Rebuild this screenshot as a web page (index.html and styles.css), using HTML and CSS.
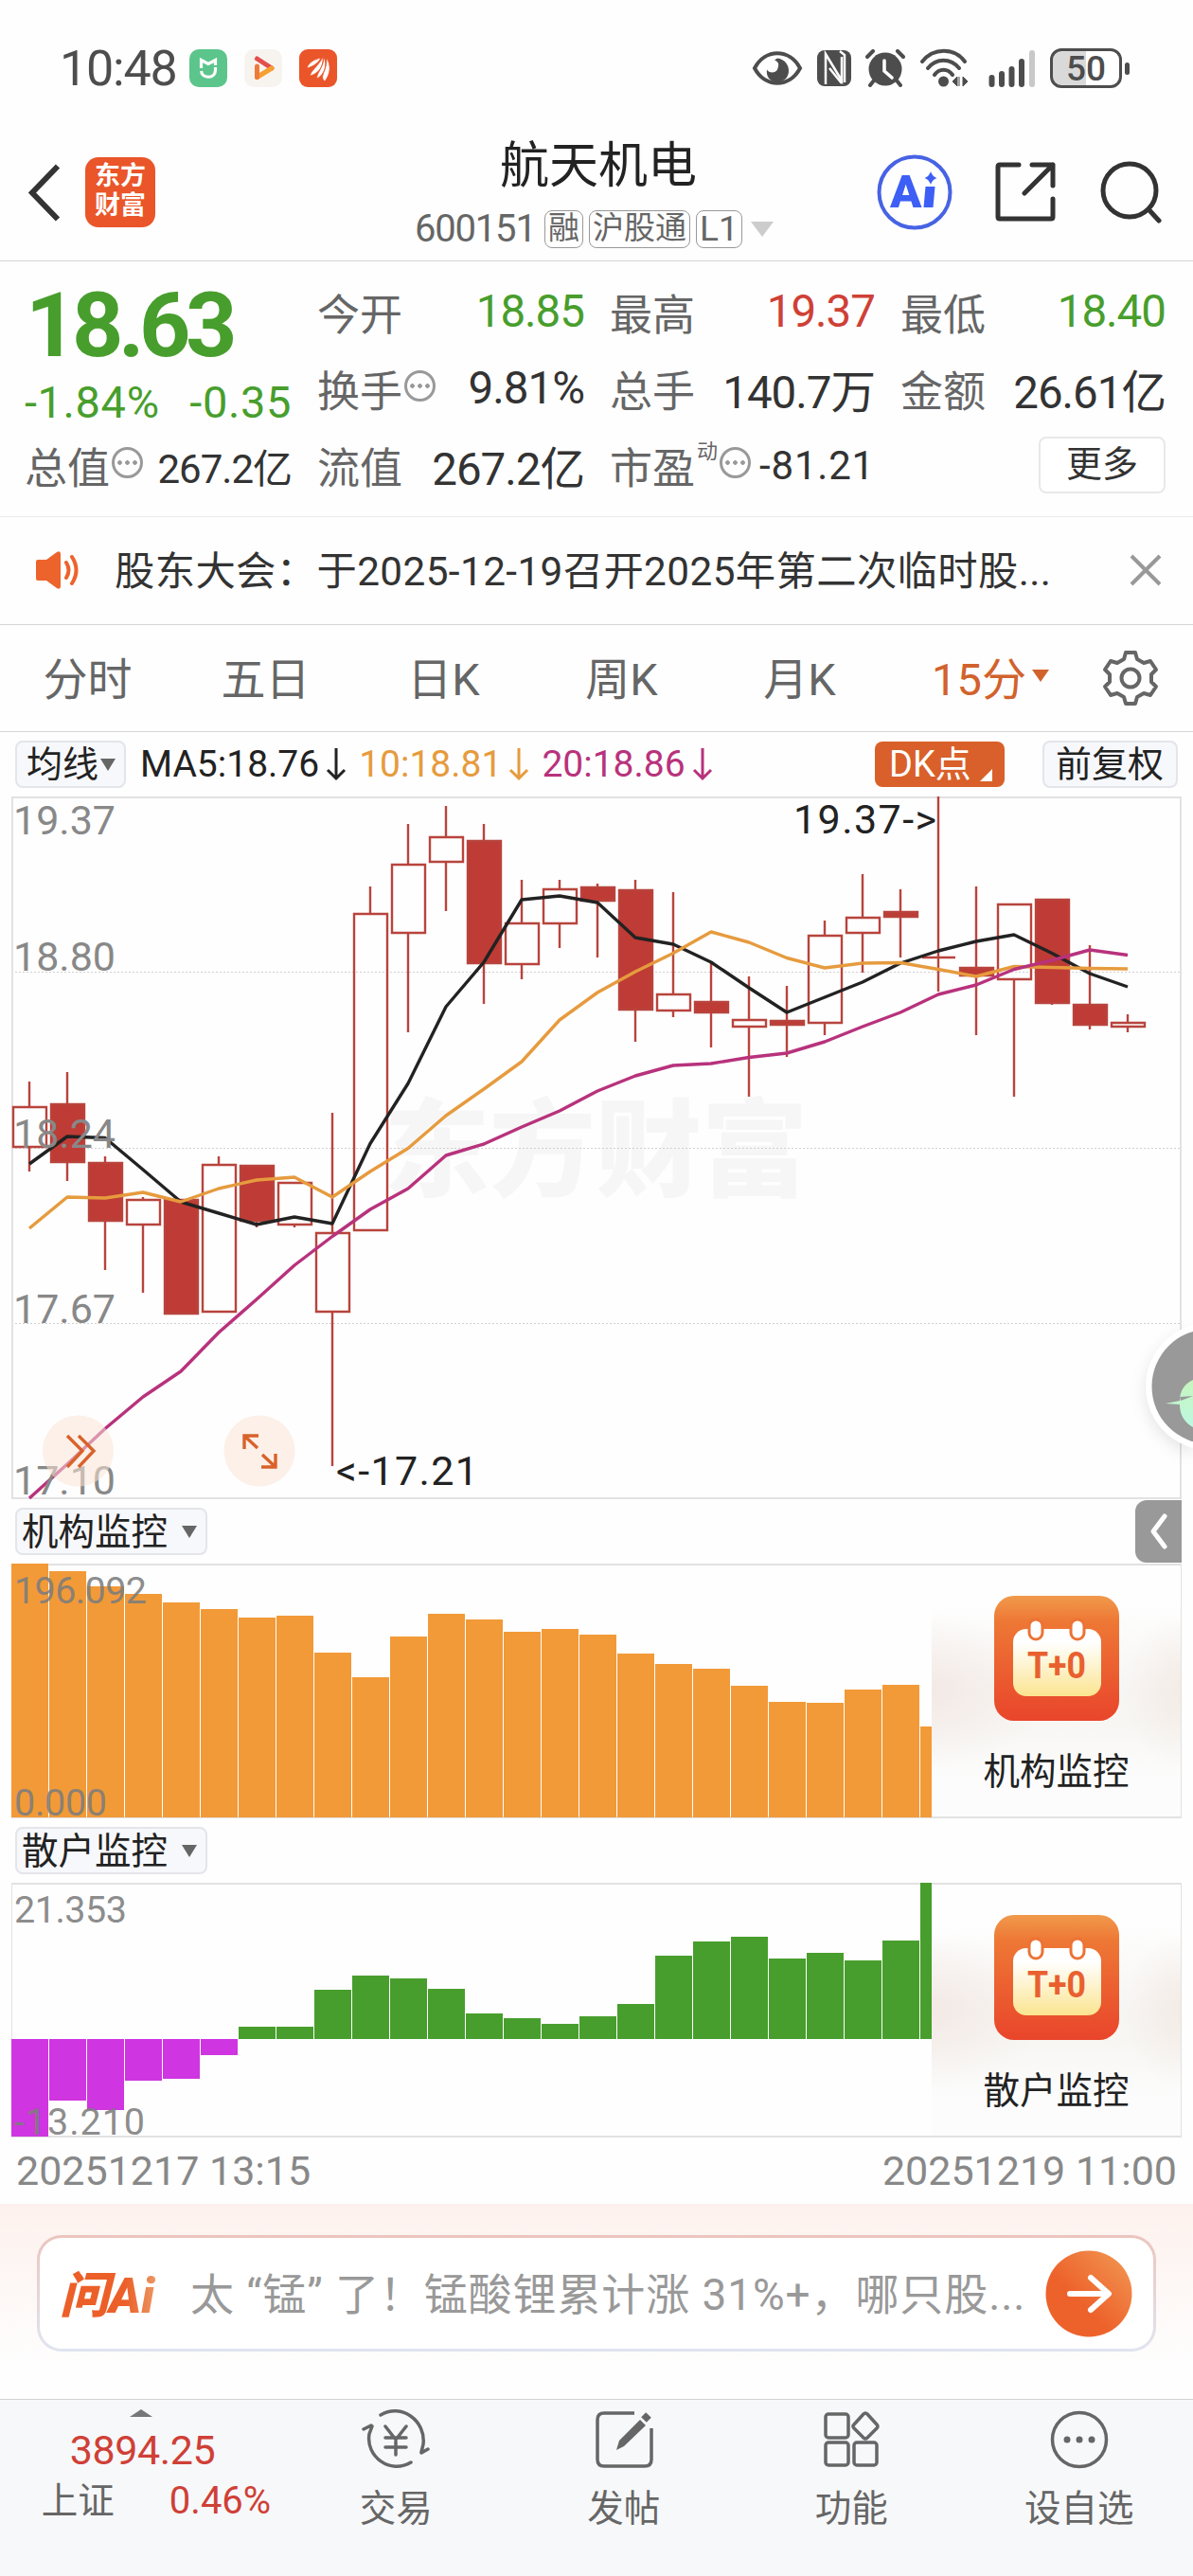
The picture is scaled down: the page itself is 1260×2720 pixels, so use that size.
FILE: index.html
```html
<!DOCTYPE html>
<html lang="zh-CN">
<head>
    <meta charset="UTF-8">
    <meta name="viewport" content="width=device-width, initial-scale=1.0">
    <title>航天机电 600151</title>
    <link rel="stylesheet" href="styles.css">
</head>
<body>
    <div class="status-bar">
        <span class="clock">10:48</span>
        <div class="status-apps">
            <svg width="40" height="40" viewBox="0 0 40 40">
                <rect width="40" height="40" rx="10" fill="#5cc58c"/>
                <path d="M12.500 20V11.500L20 15.500l7.500-4V17" fill="none" stroke="#fff" stroke-width="3.200"/>
                <path d="M12.500 23c1 8.500 15 8.500 15-1v-3" fill="none" stroke="#fff" stroke-width="3.200"/>
            </svg>
            <svg width="40" height="40" viewBox="0 0 40 40">
                <rect width="40" height="40" rx="10" fill="#f7f4f0"/>
                <path d="M13.500 10L29 20" stroke="#e2504c" stroke-width="5" stroke-linecap="round"/>
                <path d="M29 20L13.500 29.500" stroke="#f5a031" stroke-width="5" stroke-linecap="round"/>
                <path d="M13.500 18v11.500" stroke="#ee7a3a" stroke-width="5" stroke-linecap="round"/>
            </svg>
            <svg width="40" height="40" viewBox="0 0 40 40">
                <rect width="40" height="40" rx="9" fill="#ea5529"/>
                <path d="M8 20c2-6 7-9 15-11-3 6-8 9-15 11zM12 28c-2-3 9-11 13-20 1 10-4 17-13 20zM19 31c-2-4 7-12 7-23 4 9 1 18-7 23zM27 34c-4-4-2-6-1-10 2-5 3-9 3-15 5 9 4 17-2 25z" fill="#fff" stroke="#ea5529" stroke-width=".8"/>
            </svg>
        </div>
        <div class="status-icons">
            <svg class="eye" width="54" height="40" viewBox="0 0 54 40">
                <path d="M3 20C14-1 40-1 51 20 40 41 14 41 3 20z" fill="none" stroke="#4d4d4d" stroke-width="4"/>
                <path d="M27 9.500c16 2 16 25 0 25-9 0-12-7-11-13 2 4 9 4 11 0 2-5 2-8-3-10z" fill="#4d4d4d"/>
            </svg>
            <svg class="nfc" width="36" height="40" viewBox="0 0 36 40">
                <rect y="1" width="36" height="38" rx="8" fill="#4d4d4d"/>
                <path d="M9 37V5l17 28V8" fill="none" stroke="#fff" stroke-width="2.500"/>
                <path d="M13 20l13 16M24 2l5 4v29" fill="none" stroke="#fff" stroke-width="2.500"/>
            </svg>
            <svg class="alarm" width="42" height="40" viewBox="0 0 42 40">
                <circle cx="21" cy="21" r="17.500" fill="#4d4d4d"/>
                <path d="M2 8l6-6M40 8l-6-6M9 33l-4 5M33 33l4 5" stroke="#4d4d4d" stroke-width="4" stroke-linecap="round"/>
                <path d="M20 12v11l8 7" fill="none" stroke="#fff" stroke-width="3.600" stroke-linecap="round"/>
            </svg>
            <svg class="wifi" width="52" height="42" viewBox="0 0 52 42">
                <path d="M3 14C15-1 37-1 48 14M9 21c9-11 24-11 33 0M16 28c5-7 14-7 19 0" fill="none" stroke="#4d4d4d" stroke-width="4" stroke-linecap="round"/>
                <circle cx="25.500" cy="35" r="5.500" fill="#4d4d4d"/>
                <path d="M40 30v10l-5-5zM42 30v10M46 30v10l5-5z" fill="#4d4d4d" stroke="#4d4d4d" stroke-width="1"/>
            </svg>
            <svg class="signal" width="50" height="42" viewBox="0 0 50 42">
                <path d="M3.500 31v7M14 27v11M24.500 22v16M35 14v24" stroke="#4d4d4d" stroke-width="6" stroke-linecap="round"/>
                <path d="M46 5v33" stroke="#c8c8c8" stroke-width="6" stroke-linecap="round"/>
            </svg>
            <div class="battery">50</div>
            <span class="battery-tip"></span>
        </div>
    </div>

    <header class="header">
        <svg class="back" width="36" height="62" viewBox="0 0 36 62">
            <path d="M32 3.500L5 31.500L32 59.500" fill="none" stroke="#333" stroke-width="6"/>
        </svg>
        <div class="logo"><span>东方</span><span>财富</span></div>
        <div class="title">
            <h1>航天机电</h1>
            <div class="subtitle">
                <span class="code">600151</span>
                <span class="tag">融</span>
                <span class="tag">沪股通</span>
                <span class="tag level">L1</span>
                <i class="caret-code"></i>
            </div>
        </div>
        <div class="actions">
            <svg width="80" height="80" viewBox="0 0 80 80">
                <circle cx="40" cy="40" r="37.500" fill="none" stroke="#4763e4" stroke-width="4"/>
                <text class="ai-text" x="14" y="56">A</text>
                <path d="M51.500 34h10l-2 22h-10z" fill="#3d5ff5"/>
                <path d="M57 18c1.500 4 3 5.500 6.500 7-3.500 1.500-5 3-6.500 7-1.500-4-3-5.500-6.500-7 3.500-1.500 5-3 6.500-7z" fill="#3d5ff5"/>
            </svg>
            <svg class="share" width="64" height="64" viewBox="0 0 64 64">
                <path d="M25 3H5Q3 3 3 5v53q0 2 2 2h54q2 0 2-2V39M39 3h22v22M61 3L31 33" fill="none" stroke="#333" stroke-width="5" stroke-linecap="round" stroke-linejoin="round"/>
            </svg>
            <svg class="search" width="66" height="66" viewBox="0 0 66 66">
                <circle cx="31" cy="31" r="28" fill="none" stroke="#333" stroke-width="5"/>
                <path d="M51 51l11 12" stroke="#333" stroke-width="5" stroke-linecap="round"/>
            </svg>
        </div>
    </header>

    <section class="quote">
        <div class="price-col">
            <div class="price">18.63</div>
            <div class="change"><span>-1.84%</span><span>-0.35</span></div>
            <div class="item small"><label>总值</label><i class="info"></i><b>267.2亿</b></div>
        </div>
        <div class="quote-grid">
            <div class="item"><label>今开</label><b class="down">18.85</b></div>
            <div class="item"><label>最高</label><b class="up">19.37</b></div>
            <div class="item"><label>最低</label><b class="down">18.40</b></div>
            <div class="item"><label>换手</label><i class="info"></i><b>9.81%</b></div>
            <div class="item"><label>总手</label><b>140.7万</b></div>
            <div class="item"><label>金额</label><b>26.61亿</b></div>
            <div class="item"><label>流值</label><b>267.2亿</b></div>
            <div class="item small pe"><label>市盈<sup>动</sup></label><i class="info"></i><b>-81.21</b></div>
            <div class="item"><button class="more">更多</button></div>
        </div>
    </section>

    <section class="notice">
        <svg width="48" height="42" viewBox="0 0 48 42">
            <path d="M1 12q0-2 2-2h9L23 2q4-2 4 2v34q0 4-4 2l-11-8H3q-2 0-2-2z" fill="#ed632c"/>
            <path d="M33 13q5 8 0 16M39 7q9 14 0 28" fill="none" stroke="#ed632c" stroke-width="4" stroke-linecap="round"/>
        </svg>
        <p>股东大会：于2025-12-19召开2025年第二次临时股...</p>
        <svg class="close" width="34" height="34" viewBox="0 0 34 34">
            <path d="M2 2l30 30M32 2L2 32" stroke="#999" stroke-width="4"/>
        </svg>
    </section>

    <nav class="tabs">
        <span>分时</span>
        <span>五日</span>
        <span>日K</span>
        <span>周K</span>
        <span>月K</span>
        <span class="active">15分<i></i></span>
        <svg width="60" height="60" viewBox="0 0 60 60">
            <path d="M25 3h10l2 7 7 4 7-2 6 9-5 5v8l5 5-6 9-7-2-7 4-2 7H25l-2-7-7-4-7 2-6-9 5-5v-8l-5-5 6-9 7 2 7-4z" fill="none" stroke="#666" stroke-width="4" stroke-linejoin="round"/>
            <circle cx="30" cy="30" r="9.500" fill="none" stroke="#666" stroke-width="4"/>
        </svg>
    </nav>

    <section class="ma-bar">
        <span class="pill">均线<i class="caret"></i></span>
        <div class="ma-values">
            <span class="ma5">MA5:18.76<svg width="22" height="36" viewBox="0 0 22 36"><path d="M11 1v32M2 24l9 9 9-9"/></svg></span>
            <span class="ma10">10:18.81<svg width="22" height="36" viewBox="0 0 22 36"><path d="M11 1v32M2 24l9 9 9-9"/></svg></span>
            <span class="ma20">20:18.86<svg width="22" height="36" viewBox="0 0 22 36"><path d="M11 1v32M2 24l9 9 9-9"/></svg></span>
        </div>
        <span class="dk">DK点<i></i></span>
        <span class="pill">前复权</span>
    </section>

    <section class="kline">
        <svg id="kline" width="1236" height="742" viewBox="0 0 1236 742"></svg>
    </section>

    <div class="sub-bar">
        <span class="pill wide">机构监控<i class="caret"></i></span>
        <span class="drawer"><svg width="20" height="40" viewBox="0 0 20 40"><path d="M16 4L4 20l12 16" fill="none" stroke="#fff" stroke-width="5" stroke-linecap="round" stroke-linejoin="round"/></svg></span>
    </div>
    <section class="sub-chart">
        <svg id="inst" width="972" height="268" viewBox="0 0 972 268"></svg>
        <div class="promo">
            <svg class="t0" width="132" height="132" viewBox="0 0 132 132">
                <defs>
                    <linearGradient id="t0-bg" x1="0" y1="0" x2="0" y2="1">
                        <stop offset="0" stop-color="#f09a4c"/>
                        <stop offset=".2" stop-color="#ee7835"/>
                        <stop offset="1" stop-color="#e9452b"/>
                    </linearGradient>
                    <linearGradient id="t0-page" x1="0" y1="0" x2="0" y2="1">
                        <stop offset=".2" stop-color="#fff"/>
                        <stop offset="1" stop-color="#fbe490"/>
                    </linearGradient>
                </defs>
                <rect width="132" height="132" rx="21" fill="url(#t0-bg)"/>
                <rect x="20" y="35" width="93" height="71" rx="14" fill="url(#t0-page)"/>
                <rect x="37" y="25" width="14" height="21" rx="7" fill="#fff" stroke="#ec7335" stroke-width="3"/>
                <rect x="81" y="25" width="14" height="21" rx="7" fill="#fff" stroke="#ec7335" stroke-width="3"/>
                <text x="35" y="87" textLength="62" lengthAdjust="spacingAndGlyphs">T+0</text>
            </svg>
            <span>机构监控</span>
        </div>
    </section>

    <div class="sub-bar">
        <span class="pill wide">散户监控<i class="caret"></i></span>
    </div>
    <section class="sub-chart">
        <svg id="retail" width="972" height="268" viewBox="0 0 972 268"></svg>
        <div class="promo">
            <svg class="t0" width="132" height="132" viewBox="0 0 132 132">
                <rect width="132" height="132" rx="21" fill="url(#t0-bg)"/>
                <rect x="20" y="35" width="93" height="71" rx="14" fill="url(#t0-page)"/>
                <rect x="37" y="25" width="14" height="21" rx="7" fill="#fff" stroke="#ec7335" stroke-width="3"/>
                <rect x="81" y="25" width="14" height="21" rx="7" fill="#fff" stroke="#ec7335" stroke-width="3"/>
                <text x="35" y="87" textLength="62" lengthAdjust="spacingAndGlyphs">T+0</text>
            </svg>
            <span>散户监控</span>
        </div>
    </section>
    <div class="dates"><span>20251217 13:15</span><span>20251219 11:00</span></div>

    <section class="ask">
        <div class="ask-box">
            <span class="ask-logo">问Ai</span>
            <p>太 “锰” 了！锰酸锂累计涨 31%+，哪只股...</p>
            <svg width="92" height="92" viewBox="0 0 92 92">
                <defs>
                    <linearGradient id="go" x1="0" y1="1" x2="1" y2="0">
                        <stop offset=".4" stop-color="#ed622b"/>
                        <stop offset="1" stop-color="#f29a55"/>
                    </linearGradient>
                </defs>
                <circle cx="46" cy="46" r="45.500" fill="url(#go)"/>
                <path d="M26 46h40M48 29l19 17-19 17" fill="none" stroke="#fff" stroke-width="6" stroke-linecap="round" stroke-linejoin="round"/>
            </svg>
        </div>
    </section>

    <footer class="footer">
        <div class="index">
            <i></i>
            <b>3894.25</b>
            <div><span>上证</span><em>0.46%</em></div>
        </div>
        <div class="nav-item">
            <svg width="72" height="64" viewBox="0 0 72 64">
                <path d="M20 6C42-7 68 12 65 37l-2 8M63 46l7-4M52 56C30 69 4 50 8 26l3-8M10 17l-8 4M36 34v14M25 18l11 14 11-14M25 30h22M25 40h22" fill="none" stroke="#666" stroke-width="3.500" stroke-linecap="round"/>
            </svg>
            <span>交易</span>
        </div>
        <div class="nav-item">
            <svg width="64" height="64" viewBox="0 0 64 64">
                <path d="M43 4H11Q4 4 4 11v42q0 7 7 7h43q7 0 7-7V20" fill="none" stroke="#666" stroke-width="3.500"/>
                <path d="M24 43l3-10 22-22 6 6-23 22z" fill="#666"/>
                <path d="M53 11l5-5" stroke="#666" stroke-width="8"/>
            </svg>
            <span>发帖</span>
        </div>
        <div class="nav-item">
            <svg width="64" height="64" viewBox="0 0 64 64">
                <g fill="none" stroke="#666" stroke-width="3.500" stroke-linejoin="round">
                    <rect x="5" y="5" width="24" height="25" rx="3"/>
                    <rect x="5" y="35" width="24" height="24" rx="3"/>
                    <rect x="35" y="35" width="24" height="24" rx="3"/>
                    <path d="M45 5q2-2 4 0l10 11q2 2 0 4L49 30q-2 2-4 0L35 20q-2-2 0-4z"/>
                </g>
            </svg>
            <span>功能</span>
        </div>
        <div class="nav-item">
            <svg width="64" height="64" viewBox="0 0 64 64">
                <circle cx="32" cy="32" r="28.500" fill="none" stroke="#666" stroke-width="3.500"/>
                <g fill="#666"><circle cx="19" cy="32" r="3.500"/><circle cx="32" cy="32" r="3.500"/><circle cx="45" cy="32" r="3.500"/></g>
            </svg>
            <span>设自选</span>
        </div>
    </footer>

    <svg class="float-ball" width="60" height="150" viewBox="0 0 60 150">
        <defs>
            <linearGradient id="leaf" x1="0" y1="0" x2="0" y2="1">
                <stop offset="0" stop-color="#c6f5bd"/>
                <stop offset="1" stop-color="#bdf8e2"/>
            </linearGradient>
        </defs>
        <circle cx="77" cy="74" r="67" fill="#fff"/>
        <circle cx="77" cy="74" r="60.500" fill="#999"/>
        <path d="M31 92l15-3c0-10 5-18 14-22v50c-9-5-14-13-14-24z" fill="url(#leaf)"/>
        <path d="M46 85l14-1-13 5z" fill="#999"/>
    </svg>
    <script src="script.js"></script>
</body>
</html>
```

FILE: styles.css
```css
* {
    box-sizing: border-box;
}
body {
    position: relative;
    width: 1260px;
    height: 2720px;
    margin: 0;
    overflow: hidden;
    background: #fefefe;
    color: #333;
    font-family: Roboto, "Noto Sans CJK SC", sans-serif;
    white-space: nowrap;
}
svg {
    display: block;
    flex: none;
}
h1, p {
    margin: 0;
}
b, em, i {
    font-weight: normal;
    font-style: normal;
}

/* status bar */
.status-bar {
    display: flex;
    align-items: center;
    height: 144px;
    padding: 0 67px 0 63px;
    color: #4d4d4d;
}
.clock {
    width: 137px;
    font-size: 52px;
    letter-spacing: -1.2px;
}
.status-apps {
    display: flex;
    gap: 18px;
}
.status-icons {
    display: flex;
    align-items: center;
    margin-left: auto;
}
.nfc {
    margin-left: 15px;
}
.alarm {
    margin-left: 15px;
}
.wifi {
    margin-left: 15px;
}
.signal {
    margin-left: 21px;
}
.battery {
    width: 76px;
    height: 42px;
    margin-left: 15px;
    border: 3px solid #4d4d4d;
    border-radius: 12px;
    background: linear-gradient(90deg, #d9d9d9 50%, #fff 50%);
    font-size: 37px;
    font-weight: 500;
    line-height: 37px;
    text-align: center;
}
.battery-tip {
    width: 5px;
    height: 13px;
    margin-left: 3px;
    border-radius: 3px;
    background: #4d4d4d;
}

/* header */
.header {
    display: flex;
    align-items: center;
    height: 132px;
    padding: 0 32px 14px 29px;
    border-bottom: 1px solid #d5d5d5;
}
.logo {
    display: flex;
    flex-direction: column;
    justify-content: center;
    width: 74px;
    height: 74px;
    margin-left: 25px;
    padding-bottom: 2px;
    border-radius: 14px;
    background: #ea5529;
    color: #fff;
    font-size: 27px;
    font-weight: 700;
    line-height: 31px;
    text-align: center;
}
.title {
    width: 762px;
    padding-top: 14px;
}
.title h1 {
    padding-left: 364px;
    color: #222;
    font-size: 52px;
    font-weight: 400;
    line-height: 64px;
}
.subtitle {
    display: flex;
    align-items: center;
    gap: 6px;
    height: 68px;
    padding-left: 274px;
    color: #666;
}
.code {
    width: 131px;
    font-size: 40px;
    letter-spacing: -1.2px;
}
.tag {
    height: 40px;
    padding: 0 3px;
    border: 1px solid #999;
    border-radius: 8px;
    font-size: 33px;
    line-height: 35px;
}
.level {
    font-size: 37px;
    line-height: 38px;
}
.caret-code {
    margin-left: 3px;
    border: 12px solid transparent;
    border-top: 16px solid #ccc;
    border-bottom: 0;
}
.actions {
    display: flex;
    align-items: center;
    margin-left: auto;
}
.ai-text {
    fill: #3d5ff5;
    font-size: 49px;
    font-weight: 900;
}
.share {
    margin-left: 45px;
}
.search {
    margin-left: 47px;
}

/* quote */
.quote {
    display: flex;
    height: 270px;
    padding: 14px 27px 0 26px;
    border-bottom: 1px solid #ebebeb;
}
.price-col {
    width: 309px;
    padding-right: 27px;
}
.price {
    height: 106px;
    padding-left: 1px;
    color: #489e2d;
    font-size: 95px;
    font-weight: 700;
    line-height: 108px;
    letter-spacing: -5.5px;
}
.change {
    display: flex;
    justify-content: space-between;
    height: 56px;
    color: #489e2d;
    font-size: 47px;
    line-height: 58px;
    letter-spacing: 0.6px;
}
.quote-grid {
    display: grid;
    grid-template-columns: 282px 280px 280px;
    grid-auto-rows: 81px;
    column-gap: 27px;
    flex: 1;
}
.item {
    display: flex;
    align-items: center;
    height: 81px;
    padding-bottom: 3px;
}
.item label {
    color: #666;
    font-size: 45px;
}
.item b {
    margin-left: auto;
    font-size: 47.5px;
    letter-spacing: -1px;
}
.item.small b {
    font-size: 42px;
}
.item.pe b {
    letter-spacing: 0.8px;
}
.item sup {
    margin-left: 2px;
    font-size: 22px;
    line-height: 0;
    vertical-align: 27px;
}
.item .up {
    color: #cf4036;
}
.item .down {
    color: #489e2d;
}
.info {
    width: 33px;
    height: 33px;
    margin: -5px 0 0 2px;
    border: 3px solid #999;
    border-radius: 50%;
    background:
        radial-gradient(circle, #999 2px, transparent 2.6px) -8px 0 / 27px 27px no-repeat,
        radial-gradient(circle, #999 2px, transparent 2.6px) 0 0 / 27px 27px no-repeat,
        radial-gradient(circle, #999 2px, transparent 2.6px) 8px 0 / 27px 27px no-repeat;
}
.more {
    width: 134px;
    height: 60px;
    margin-left: auto;
    padding: 0 0 3px;
    border: 2px solid #e8e8e8;
    border-radius: 8px;
    background: #fff;
    color: #333;
    font-family: inherit;
    font-size: 38px;
    line-height: 52px;
}

/* notice */
.notice {
    display: flex;
    align-items: center;
    height: 114px;
    padding: 0 33px 2px 37px;
    border-bottom: 1px solid #d5d5d5;
}
.notice p {
    margin-left: 36px;
    padding-bottom: 4px;
    font-size: 42.3px;
    letter-spacing: 0.4px;
}
.close {
    margin-left: auto;
}

/* period tabs */
.tabs {
    display: flex;
    align-items: center;
    height: 113px;
    border-bottom: 1px solid #d5d5d5;
    color: #666;
    font-size: 47px;
}
.tabs span {
    width: 188px;
    padding: 0 3px 5px 0;
    text-align: center;
}
.tabs .active {
    display: flex;
    align-items: center;
    justify-content: center;
    width: 224px;
    padding-right: 12px;
    color: #d2622c;
}
.tabs .active i {
    margin-left: 6px;
    border: 9px solid transparent;
    border-top: 13px solid #d2622c;
    border-bottom: 0;
}

/* moving averages */
.ma-bar {
    display: flex;
    align-items: center;
    height: 68px;
    padding: 0 16px;
}
.pill {
    display: flex;
    align-items: center;
    height: 50px;
    padding: 0 13px 0 12px;
    border: 2px solid #e4e5ea;
    border-radius: 8px;
    background: #f7f8fb;
    color: #222;
    font-size: 38px;
    line-height: 45px;
}
.caret {
    margin-left: 2px;
    border: 8px solid transparent;
    border-top: 13px solid #666;
    border-bottom: 0;
}
.ma-bar .pill:first-child {
    padding: 0 9px 0 10px;
}
.wide {
    width: 203px;
    padding: 0 0 0 5px;
    font-size: 38.5px;
}
.wide .caret {
    margin-left: 15px;
}
.ma-values {
    display: flex;
    gap: 13px;
    margin-left: 15px;
    font-size: 39px;
}
.ma-values span {
    display: flex;
    align-items: center;
    gap: 7px;
}
.ma-values path {
    fill: none;
    stroke: currentColor;
    stroke-width: 3;
}
.ma5 {
    color: #222;
}
.ma10 {
    color: #e69b3e;
}
.ma20 {
    color: #b8327c;
}
.dk {
    display: flex;
    align-items: flex-end;
    width: 137px;
    height: 48px;
    margin-left: auto;
    margin-right: 40px;
    padding-left: 15px;
    border-radius: 8px;
    background: #d9602a;
    color: #fff;
    font-size: 38px;
    line-height: 48px;
}
.dk i {
    margin: 0 0 6px 9px;
    border-left: 13px solid transparent;
    border-bottom: 13px solid #fff;
}

/* charts */
.kline {
    height: 742px;
    padding-left: 12px;
}
.kline svg, .sub-chart > svg {
    overflow: visible;
}
.frame {
    fill: none;
    stroke: #e2e2e2;
    stroke-width: 2;
}
.grid {
    stroke: #d0d0d0;
    stroke-width: 1;
    stroke-dasharray: 2 2;
}
.axis {
    fill: #888;
    font-size: 43px;
}
.sub-chart .axis {
    fill: rgba(125, 125, 125, .9);
    font-size: 39.5px;
}
.watermark {
    fill: #f6f6f6;
    font-size: 112px;
    font-weight: 900;
}
.mark {
    fill: #222;
    font-size: 43px;
}
.candle {
    fill: none;
    stroke: #b8443d;
    stroke-width: 2.4;
}
.candle.fill {
    fill: #bf3b35;
}
.line {
    fill: none;
    stroke-width: 3.4;
    stroke-linejoin: round;
}
.round {
    fill: #f9e3d6;
    fill-opacity: .55;
}
.tool {
    fill: none;
    stroke: #d9622b;
    stroke-width: 3.4;
}
.sub-bar {
    display: flex;
    align-items: center;
    justify-content: space-between;
    height: 68px;
    padding: 0 12px 0 16px;
}
.drawer {
    display: flex;
    align-items: center;
    justify-content: center;
    width: 49px;
    height: 66px;
    border-radius: 12px 0 0 12px;
    background: #999;
}
.sub-chart {
    display: flex;
    width: 1236px;
    height: 269px;
    margin-left: 12px;
    border: 1px solid #e2e2e2;
    border-top: 2px solid #e2e2e2;
    border-bottom: 2px solid #e2e2e2;
}
.sub-chart > svg {
    margin: -2px 0 0 -1px;
}
.promo {
    display: flex;
    flex-direction: column;
    align-items: center;
    flex: 1;
    padding: 32px 0 0 0;
    background:
        radial-gradient(ellipse 120px 80px at 0 50%, rgba(243, 232, 228, .9), rgba(243, 232, 228, 0)),
        radial-gradient(ellipse 60px 80px at 100% 50%, rgba(243, 234, 228, .9), rgba(243, 234, 228, 0)),
        linear-gradient(#fefefe 15%, #f7f5f3 50%, #f7f6f3 62%, #fcfcfc 85%);
    color: #222;
    font-size: 38.5px;
}
.promo span {
    margin-top: 26px;
    line-height: 56px;
}
.t0 text {
    fill: #e9602f;
    font-size: 38px;
    font-weight: 700;
}
.dates {
    display: flex;
    justify-content: space-between;
    height: 70px;
    padding: 0 17px;
    color: #888;
    font-size: 43px;
    line-height: 70px;
}

/* ask bar */
.ask {
    height: 206px;
    padding: 33px 39px 0 39px;
    background: linear-gradient(#fdf1ed, #fefefe 85%);
}
.ask-box {
    display: flex;
    align-items: center;
    height: 123px;
    padding: 0 22px 0 21px;
    border: 3px solid transparent;
    border-radius: 26px;
    background:
        linear-gradient(#fff, #fff) padding-box,
        linear-gradient(#ebc5be, #e0e5f0) border-box;
}
.ask-logo {
    width: 138px;
    padding-bottom: 5px;
    color: #ed672f;
    font-size: 52px;
    font-style: italic;
    font-weight: 900;
    letter-spacing: 0;
    background: linear-gradient(90deg, #ec5f28 50%, #eba06c 78%);
    -webkit-background-clip: text;
    background-clip: text;
    -webkit-text-fill-color: transparent;
}
.ask-box p {
    flex: 1;
    padding-bottom: 6px;
    color: #999;
    font-size: 46px;
    letter-spacing: 0.9px;
}

/* bottom navigation */
.footer {
    display: flex;
    height: 188px;
    border-top: 1px solid #d0d2d5;
    background: #f7f8fa;
    color: #666;
    font-size: 38.5px;
}
.index {
    display: flex;
    flex-direction: column;
    align-items: center;
    width: 298px;
    padding-top: 10px;
}
.index i {
    border: 12px solid transparent;
    border-top: 0;
    border-bottom: 8px solid #777;
}
.index b {
    margin-top: 7px;
    padding-left: 3px;
    color: #cf4036;
    font-size: 43px;
    line-height: 56px;
    letter-spacing: -0.4px;
}
.index div {
    display: flex;
    gap: 58px;
    padding-left: 32px;
    line-height: 52px;
}
.index em {
    color: #cf4036;
    font-size: 40px;
}
.nav-item {
    display: flex;
    flex-direction: column;
    align-items: center;
    flex: 1;
    padding-top: 10px;
}
.nav-item span {
    margin-top: 13px;
    line-height: 55px;
}
.float-ball {
    position: absolute;
    left: 1200px;
    top: 1390px;
    filter: drop-shadow(0 6px 8px rgba(0, 0, 0, .1));
}
```

FILE: script.js
```js
// high, body top, body bottom, low, filled (chart pixels)
const candles = [
    [301, 328, 370, 396, 0], [291, 325, 386, 406, 1], [380, 387, 448, 500, 1], [423, 426, 452, 524, 0],
    [426, 426, 546, 546, 1], [380, 389, 544, 544, 0], [389, 390, 448, 455, 1], [408, 408, 452, 455, 0],
    [334, 461, 544, 707, 0], [95, 124, 458, 458, 0], [29, 72, 144, 249, 0], [10, 43, 69, 121, 0],
    [29, 47, 176, 219, 1], [88, 134, 177, 193, 0], [88, 98, 134, 160, 0], [92, 96, 110, 170, 1],
    [88, 99, 225, 259, 1], [101, 209, 226, 233, 0], [176, 217, 228, 265, 1], [190, 236, 243, 317, 0],
    [200, 237, 241, 275, 1], [131, 147, 239, 252, 0], [82, 128, 144, 186, 0], [98, 122, 127, 170, 1],
    [0, 170, 170, 206, 1], [95, 181, 189, 252, 1], [114, 114, 193, 317, 0], [109, 109, 218, 220, 1],
    [157, 220, 241, 246, 1], [230, 239, 243, 249, 0]
];
const ma5 = [388, 359, 360.5, 394, 428, 440, 452, 444, 451, 366.5, 303, 222, 175, 109, 105, 112, 149, 156, 175, 202, 228, 212, 196, 176, 163, 153, 146, 165.5, 187, 201];
const ma10 = [456, 423, 424, 418, 428, 414, 405, 402, 423, 396, 371.5, 337, 309, 280, 236, 207, 185, 165.5, 143, 154, 170.5, 181, 176, 175.5, 182.5, 190, 179.5, 180.5, 181.5, 182];
const ma20 = [741, 705, 667.5, 634, 607, 566, 531, 495, 464.5, 436, 414, 379, 367, 349, 332, 311, 295, 284, 282, 275.5, 271, 259, 243, 228, 209, 199, 182.5, 173, 162, 167.5];

const inst = [0, 8, 24, 32, 41, 48, 57, 55, 94, 120, 77, 53, 59, 72, 69, 75, 95, 106, 111, 129, 146, 147, 133, 128, 172];
const retail = [268, 230, 240, 209, 207, 182, 152, 152, 113, 98, 101, 112, 138, 143, 149, 141, 128, 77, 62, 57, 80, 74, 82, 61, 0];

function polyline(data, color) {
    const points = data.map((y, i) => `${19 + i * 40},${y}`).join(' ');
    return `<polyline class="line" stroke="${color}" points="${points}"/>`;
}

function drawKline() {
    let html = '<text class="watermark" x="393" y="414" textLength="448">东方财富</text>';
    [185, 371, 556].forEach(y => {
        html += `<line class="grid" x1="0" x2="1236" y1="${y}.5" y2="${y}.5"/>`;
    });
    html += '<rect class="frame" x="1" y="1" width="1234" height="740"/>';
    candles.forEach(([high, top, bottom, low, filled], i) => {
        const x = 19 + i * 40;
        html += `<path class="candle${filled ? ' fill' : ''}" d="M${x} ${high}V${top}M${x} ${bottom}V${low}M${x - 17} ${top}h35V${bottom}h-35z"/>`;
    });
    html += polyline(ma5, '#222') + polyline(ma10, '#e69b3e') + polyline(ma20, '#b8327c');
    [['19.37', 40], ['18.80', 184], ['18.24', 371], ['17.67', 556], ['17.10', 737]].forEach(([label, y]) => {
        html += `<text class="axis" x="2" y="${y}">${label}</text>`;
    });
    html += '<text class="mark" x="826" y="39" textLength="151">19.37-&gt;</text>';
    html += '<text class="mark" x="343" y="727" textLength="150">&lt;-17.21</text>';
    html += '<circle class="round" cx="70.500" cy="691" r="37.500"/><circle class="round" cx="262" cy="691" r="37.500"/>';
    html += '<path class="tool" d="M59 675l16 16-16 17M71 675l16 16-16 17"/>';
    html += '<path class="tool" d="M261 675h-15v14M246 675l14 13M264 708h15v-14M279 708l-14-13"/>';
    document.getElementById('kline').innerHTML = html;
}

function drawBars(id, values, base, labels) {
    let html = '';
    values.forEach((y, i) => {
        const color = id === 'inst' ? '#f29a38' : (y > base ? '#cf35e0' : '#489e2d');
        const width = i < 24 ? 39 : 12;
        html += `<rect x="${i * 40}" y="${Math.min(y, base)}" width="${width}" height="${Math.abs(y - base)}" fill="${color}"/>`;
    });
    labels.forEach(([label, y, width]) => {
        html += `<text class="axis" x="3" y="${y}" textLength="${width}">${label}</text>`;
    });
    document.getElementById(id).innerHTML = html;
}

drawKline();
drawBars('inst', inst, 268, [['196.092', 42, 140], ['0.000', 266, 98]]);
drawBars('retail', retail, 165, [['21.353', 42, 119], ['-13.210', 266, 138]]);
```
